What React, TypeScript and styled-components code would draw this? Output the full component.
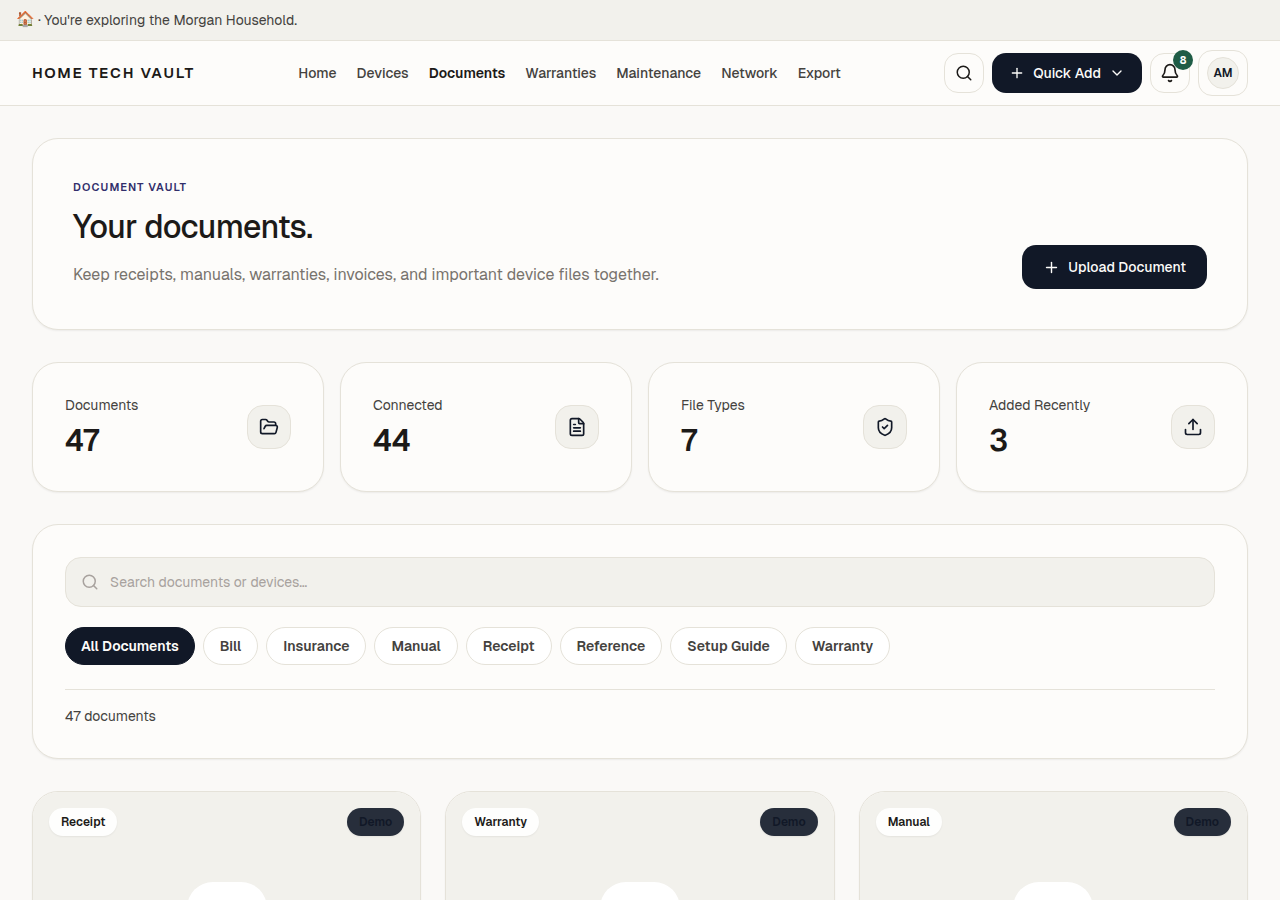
import React, { useState } from "react";
import styled, { createGlobalStyle, css } from "styled-components";
import {
  Bell,
  ChevronDown,
  FileText,
  FolderOpen,
  Plus,
  Search,
  ShieldCheck,
  Upload,
} from "lucide-react";

const color = {
  page: "#faf9f7",
  surface: "#fdfcfa",
  sunken: "#f2f1ec",
  line: "#e5e2d9",
  ink: "#1c1a18",
  body: "#44423e",
  muted: "#78736d",
  faint: "#a8a29e",
  navy: "#111827",
  indigo: "#312e6b",
  green: "#1f5c46",
};

const GlobalStyle = createGlobalStyle`
  *, *::before, *::after { box-sizing: border-box; }
  body {
    margin: 0;
    background: ${color.page};
    color: ${color.ink};
    font-family: Geist, Inter, "Liberation Sans", sans-serif;
    font-size: 14px;
    line-height: 20px;
    -webkit-font-smoothing: antialiased;
  }
  h1, p { margin: 0; }
  button, input { font: inherit; color: inherit; }
  button { cursor: pointer; }
`;

const Banner = styled.div`
  display: flex;
  align-items: center;
  gap: 3px;
  height: 41px;
  padding: 0 16px;
  background: ${color.sunken};
  border-bottom: 1px solid ${color.line};
  color: ${color.body};
`;

const BannerIcon = styled.span`
  font-size: 15px;
  line-height: 18px;
  padding-bottom: 2px;
`;

const Header = styled.header`
  display: flex;
  align-items: center;
  justify-content: space-between;
  height: 65px;
  padding: 0 32px;
  background: ${color.surface};
  border-bottom: 1px solid ${color.line};
`;

const Brand = styled.a`
  color: ${color.ink};
  font-size: 15px;
  font-weight: 600;
  letter-spacing: 0.12em;
  text-decoration: none;
`;

const Nav = styled.nav`
  display: flex;
  gap: 20px;
`;

const NavLink = styled.a<{ $active?: boolean }>`
  color: ${(p) => (p.$active ? color.ink : color.body)};
  font-weight: ${(p) => (p.$active ? 600 : 500)};
  text-decoration: none;
`;

const Actions = styled.div`
  display: flex;
  align-items: center;
  gap: 8px;
`;

const outlined = css`
  position: relative;
  display: inline-flex;
  align-items: center;
  justify-content: center;
  background: ${color.surface};
  border: 1px solid ${color.line};
  border-radius: 14px;
`;

const IconButton = styled.button`
  ${outlined}
  width: 40px;
  height: 40px;
  padding: 0;
`;

const AvatarButton = styled.button`
  ${outlined}
  padding: 6px 8px;
`;

const Avatar = styled.span`
  display: grid;
  place-items: center;
  width: 32px;
  height: 32px;
  border: 1px solid ${color.line};
  border-radius: 50%;
  background: ${color.sunken};
  color: ${color.navy};
  font-size: 12px;
  font-weight: 600;
`;

const Count = styled.span`
  position: absolute;
  top: -4px;
  right: -4px;
  width: 20px;
  height: 20px;
  border-radius: 50%;
  background: ${color.green};
  color: #fff;
  font-size: 10px;
  font-weight: 700;
  line-height: 21px;
  text-align: center;
`;

const PrimaryButton = styled.button<{ $large?: boolean }>`
  display: inline-flex;
  align-items: center;
  gap: 8px;
  height: ${(p) => (p.$large ? 44 : 40)}px;
  padding: 0 ${(p) => (p.$large ? 21 : 17)}px;
  border: 0;
  border-radius: 14px;
  background: ${color.navy};
  color: ${color.surface};
  font-weight: 500;
  white-space: nowrap;
`;

const Main = styled.main`
  display: flex;
  flex-direction: column;
  gap: 32px;
  padding: 32px;
`;

const panel = css`
  background: ${color.surface};
  border: 1px solid ${color.line};
  border-radius: 26px;
  box-shadow: 0 1px 2px rgba(0, 0, 0, 0.06);
`;

const Hero = styled.section`
  ${panel}
  display: flex;
  align-items: flex-end;
  justify-content: space-between;
  gap: 24px;
  padding: 40px;
`;

const Eyebrow = styled.p`
  color: ${color.indigo};
  font-size: 11px;
  font-weight: 600;
  line-height: 16px;
  letter-spacing: 0.1em;
`;

const Title = styled.h1`
  margin: 12px 0 14px;
  font-size: 32px;
  font-weight: 500;
  line-height: 40px;
  letter-spacing: -0.02em;
`;

const Lead = styled.p`
  color: ${color.muted};
  font-size: 16px;
  line-height: 28px;
`;

const Stats = styled.section`
  display: grid;
  grid-template-columns: repeat(4, 1fr);
  gap: 16px;
`;

const Stat = styled.div`
  ${panel}
  display: flex;
  align-items: center;
  justify-content: space-between;
  padding: 32px;
`;

const StatLabel = styled.p`
  color: ${color.body};
`;

const StatValue = styled.p`
  margin-top: 8px;
  font-size: 30px;
  font-weight: 600;
  line-height: 36px;
  letter-spacing: -0.02em;
`;

const StatIcon = styled.span`
  display: grid;
  place-items: center;
  width: 44px;
  height: 44px;
  border: 1px solid ${color.line};
  border-radius: 16px;
  background: ${color.sunken};
  color: ${color.navy};
`;

const Filters = styled.section`
  ${panel}
  padding: 32px;
`;

const SearchField = styled.label`
  display: flex;
  align-items: center;
  gap: 11px;
  height: 50px;
  padding: 0 15px;
  border: 1px solid ${color.line};
  border-radius: 16px;
  background: ${color.sunken};
  color: ${color.faint};
`;

const SearchInput = styled.input`
  flex: 1;
  min-width: 0;
  padding: 0;
  border: 0;
  outline: 0;
  background: transparent;
  color: ${color.ink};
  &::placeholder {
    color: ${color.faint};
    opacity: 1;
  }
`;

const Chips = styled.div`
  display: flex;
  flex-wrap: wrap;
  gap: 8px;
  margin: 20px 0 24px;
`;

const Chip = styled.button<{ $active: boolean }>`
  height: 38px;
  padding: 0 ${(p) => (p.$active ? 15 : 16)}px;
  border: 1px solid ${(p) => (p.$active ? color.navy : color.line)};
  border-radius: 19px;
  background: ${(p) => (p.$active ? color.navy : "#fff")};
  color: ${(p) => (p.$active ? color.surface : color.body)};
  font-weight: 600;
`;

const ResultCount = styled.p`
  padding-top: 16px;
  border-top: 1px solid ${color.line};
  color: ${color.body};
`;

const Cards = styled.section`
  display: grid;
  grid-template-columns: repeat(3, 1fr);
  gap: 24px;
`;

const Card = styled.article`
  ${panel}
  overflow: hidden;
`;

const Preview = styled.div`
  display: grid;
  grid-template-rows: 28px 1fr;
  gap: 46px;
  height: 260px;
  padding: 16px;
  background: ${color.sunken};
`;

const Badges = styled.div`
  display: flex;
  justify-content: space-between;
`;

const Badge = styled.span<{ $dark?: boolean }>`
  padding: 4px 12px;
  border-radius: 14px;
  background: ${(p) => (p.$dark ? "#272e3b" : "#fefefd")};
  color: ${(p) => (p.$dark ? color.navy : color.ink)};
  box-shadow: 0 1px 2px rgba(0, 0, 0, 0.06);
  font-size: 12px;
  font-weight: 600;
`;

const Tile = styled.div`
  justify-self: center;
  width: 80px;
  height: 80px;
  border-radius: 26px;
  background: #fff;
`;

const navItems = ["Home", "Devices", "Documents", "Warranties", "Maintenance", "Network", "Export"];

const stats = [
  { label: "Documents", value: 47, Icon: FolderOpen },
  { label: "Connected", value: 44, Icon: FileText },
  { label: "File Types", value: 7, Icon: ShieldCheck },
  { label: "Added Recently", value: 3, Icon: Upload },
];

const filters = [
  "All Documents",
  "Bill",
  "Insurance",
  "Manual",
  "Receipt",
  "Reference",
  "Setup Guide",
  "Warranty",
];

const documents = ["Receipt", "Warranty", "Manual"];

export default function App() {
  const [filter, setFilter] = useState("All Documents");
  const [query, setQuery] = useState("");

  return (
    <>
      <GlobalStyle />
      <Banner>
        <BannerIcon>🏠</BannerIcon>
        <span>· You're exploring the Morgan Household.</span>
      </Banner>
      <Header>
        <Brand href="#">HOME TECH VAULT</Brand>
        <Nav>
          {navItems.map((item) => (
            <NavLink key={item} href="#" $active={item === "Documents"}>
              {item}
            </NavLink>
          ))}
        </Nav>
        <Actions>
          <IconButton aria-label="Search">
            <Search size={18} />
          </IconButton>
          <PrimaryButton>
            <Plus size={16} />
            Quick Add
            <ChevronDown size={16} />
          </PrimaryButton>
          <IconButton aria-label="Notifications">
            <Bell size={20} />
            <Count>8</Count>
          </IconButton>
          <AvatarButton aria-label="Account">
            <Avatar>AM</Avatar>
          </AvatarButton>
        </Actions>
      </Header>
      <Main>
        <Hero>
          <div>
            <Eyebrow>DOCUMENT VAULT</Eyebrow>
            <Title>Your documents.</Title>
            <Lead>
              Keep receipts, manuals, warranties, invoices, and important device files together.
            </Lead>
          </div>
          <PrimaryButton $large>
            <Plus size={17} />
            Upload Document
          </PrimaryButton>
        </Hero>
        <Stats>
          {stats.map(({ label, value, Icon }) => (
            <Stat key={label}>
              <div>
                <StatLabel>{label}</StatLabel>
                <StatValue>{value}</StatValue>
              </div>
              <StatIcon>
                <Icon size={20} />
              </StatIcon>
            </Stat>
          ))}
        </Stats>
        <Filters>
          <SearchField>
            <Search size={18} />
            <SearchInput
              aria-label="Search documents or devices"
              placeholder="Search documents or devices…"
              value={query}
              onChange={(e) => setQuery(e.target.value)}
            />
          </SearchField>
          <Chips>
            {filters.map((name) => (
              <Chip key={name} $active={name === filter} onClick={() => setFilter(name)}>
                {name}
              </Chip>
            ))}
          </Chips>
          <ResultCount>47 documents</ResultCount>
        </Filters>
        <Cards>
          {documents.map((kind) => (
            <Card key={kind}>
              <Preview>
                <Badges>
                  <Badge>{kind}</Badge>
                  <Badge $dark>Demo</Badge>
                </Badges>
                <Tile />
              </Preview>
            </Card>
          ))}
        </Cards>
      </Main>
    </>
  );
}
